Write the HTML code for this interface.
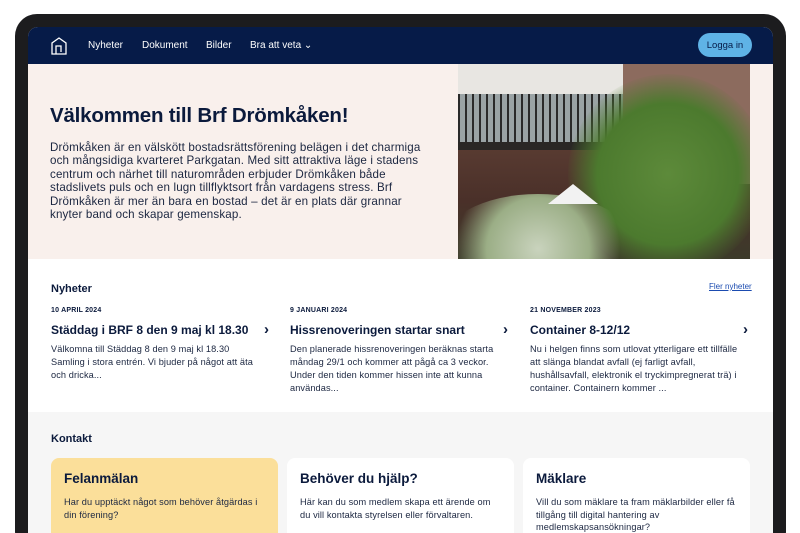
<!DOCTYPE html>
<html><head><meta charset="utf-8"><style>
*{margin:0;padding:0;box-sizing:border-box}
html,body{width:800px;height:533px;overflow:hidden}
body{background:#fff;font-family:"Liberation Sans",sans-serif;color:#0b1a3c;position:relative}
.frame{position:absolute;left:15px;top:14px;width:771px;height:540px;background:#1c1c1e;border-radius:22px}
.screen{position:absolute;left:28px;top:27px;width:745px;height:506px;background:#fff;border-radius:10px 10px 0 0;overflow:hidden}
.nav{height:37px;background:#061b48;position:relative;color:#fff;font-size:10px}
.nav span{position:absolute;top:13px}
.btn{position:absolute;left:670px;top:6px;width:54px;height:24px;border-radius:12px;background:#5fb3e6;color:#061b48;font-size:9.5px;display:flex;align-items:center;justify-content:center}
.hero{height:195px;background:#f9f0ec;position:relative}
.hero h1{position:absolute;left:22px;top:40px;font-size:20.5px;font-weight:bold;letter-spacing:-.2px}
.hero p{position:absolute;left:22px;top:77px;width:385px;font-size:11.6px;line-height:13.4px;color:#1b2640;letter-spacing:.15px}
.photo{position:absolute;left:430px;top:0;width:292px;height:195px;overflow:hidden;background:linear-gradient(180deg,#d9d6d0 0%,#b9b3aa 20%,#5a3c32 40%,#4a3029 70%,#3c3a2a 100%)}
.news{position:relative;height:148px}
.news h2{position:absolute;left:23px;top:24px;font-size:11px;font-weight:bold}
.fler{position:absolute;left:681px;top:23px;font-size:8px;color:#1b4bb0;text-decoration:underline}
.item{position:absolute;top:48px;width:220px}
.item .d{font-size:7px;font-weight:bold;letter-spacing:.2px}
.item h3{font-size:12px;font-weight:bold;margin-top:9px}
.item p{font-size:9.2px;line-height:13px;margin-top:6px;color:#1b2640;width:212px;letter-spacing:.1px}
.item .ch{position:absolute;right:2px;top:14px;font-size:15px;font-weight:bold}
.kontakt{position:absolute;top:385px;left:0;width:745px;height:140px;background:#f6f6f6}
.kontakt h2{position:absolute;left:23px;top:21px;font-size:11px;font-weight:bold}
.card{position:absolute;top:46px;width:227px;height:100px;background:#fff;border-radius:8px;padding:13px 13px}
.card h3{font-size:13.5px;font-weight:bold}
.card p{font-size:9.2px;line-height:12.5px;margin-top:10px;color:#1b2640;letter-spacing:.1px}
</style></head><body>
<div class="frame"></div>
<div class="screen">
 <div class="nav">
  <svg style="position:absolute;left:23px;top:10px" width="16" height="18" viewBox="0 0 16 18"><path d="M1 17V6L8 1l7 5v11H1z M5 17V9h5v6" fill="none" stroke="#fff" stroke-width="1.3"/></svg>
  <span style="left:60px">Nyheter</span><span style="left:114px">Dokument</span><span style="left:178px">Bilder</span><span style="left:222px">Bra att veta ⌄</span>
  <div class="btn">Logga in</div>
 </div>
 <div class="hero">
  <h1>Välkommen till Brf Drömkåken!</h1>
  <p>Drömkåken är en välskött bostadsrättsförening belägen i det charmiga och mångsidiga kvarteret Parkgatan. Med sitt attraktiva läge i stadens centrum och närhet till naturområden erbjuder Drömkåken både stadslivets puls och en lugn tillflyktsort från vardagens stress. Brf Drömkåken är mer än bara en bostad – det är en plats där grannar knyter band och skapar gemenskap.</p>
  <div class="photo">
   <div style="position:absolute;left:0;top:0;width:165px;height:30px;background:#e8e6e2"></div>
   <div style="position:absolute;left:0;top:30px;width:165px;height:48px;background:repeating-linear-gradient(90deg,#2a2a2a 0 2px,#9aa3a5 2px 7px)"></div>
   <div style="position:absolute;left:0;top:78px;width:165px;height:8px;background:#2a2725"></div>
   <div style="position:absolute;left:165px;top:0;width:127px;height:120px;background:#8c6b5e"></div>
   <div style="position:absolute;left:110px;top:10px;width:200px;height:200px;border-radius:50%;background:radial-gradient(circle,#5d8a3a 0%,#4c7a2e 50%,rgba(60,90,40,0) 72%)"></div>
   <div style="position:absolute;left:-20px;top:130px;width:200px;height:110px;border-radius:50%;background:radial-gradient(circle,#c9d3bd 0%,#9bae86 45%,rgba(90,110,70,0) 72%)"></div>
   <div style="position:absolute;left:90px;top:120px;width:50px;height:20px;background:#f2f2f2;clip-path:polygon(50% 0,100% 100%,0 100%)"></div>
  </div>
 </div>
 <div class="news">
  <h2>Nyheter</h2><a class="fler">Fler nyheter</a>
  <div class="item" style="left:23px"><div class="d">10 APRIL 2024</div><h3>Städdag i BRF 8 den 9 maj kl 18.30</h3><span class="ch">›</span><p>Välkomna till Städdag 8 den 9 maj kl 18.30<br>Samling i stora entrén. Vi bjuder på något att äta och dricka...</p></div>
  <div class="item" style="left:262px"><div class="d">9 JANUARI 2024</div><h3>Hissrenoveringen startar snart</h3><span class="ch">›</span><p>Den planerade hissrenoveringen beräknas starta måndag 29/1 och kommer att pågå ca 3 veckor. Under den tiden kommer hissen inte att kunna användas...</p></div>
  <div class="item" style="left:502px"><div class="d">21 NOVEMBER 2023</div><h3>Container 8-12/12</h3><span class="ch">›</span><p>Nu i helgen finns som utlovat ytterligare ett tillfälle att slänga blandat avfall (ej farligt avfall, hushållsavfall, elektronik el tryckimpregnerat trä) i container. Containern kommer ...</p></div>
 </div>
 <div class="kontakt">
  <h2>Kontakt</h2>
  <div class="card" style="left:23px;background:#fbdf9a"><h3>Felanmälan</h3><p>Har du upptäckt något som behöver åtgärdas i din förening?</p></div>
  <div class="card" style="left:259px"><h3>Behöver du hjälp?</h3><p>Här kan du som medlem skapa ett ärende om du vill kontakta styrelsen eller förvaltaren.</p></div>
  <div class="card" style="left:495px"><h3>Mäklare</h3><p>Vill du som mäklare ta fram mäklarbilder eller få tillgång till digital hantering av medlemskapsansökningar?</p></div>
 </div>
</div>
</body></html>
